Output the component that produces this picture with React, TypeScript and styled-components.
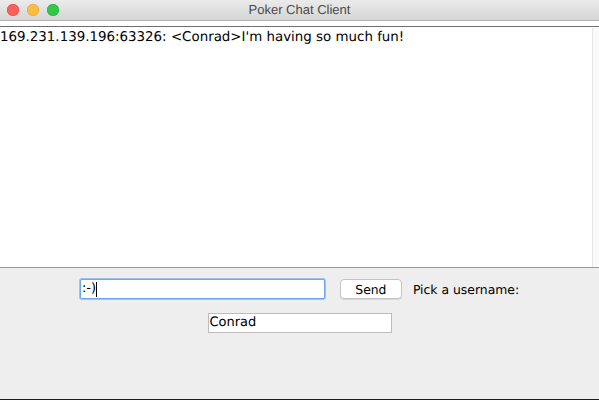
import React from "react";
import styled, { createGlobalStyle } from "styled-components";

const Global = createGlobalStyle`
  html, body { margin: 0; padding: 0; background: #ffffff; }
  body { width: 599px; height: 400px; overflow: hidden; }
`;

const Window = styled.div`
  width: 599px;
  height: 400px;
  display: flex;
  flex-direction: column;
  background: #eeeeee;
  border-bottom: 1px solid #1a1a1a;
  box-sizing: border-box;
  font-family: "DejaVu Sans", "Noto Sans", sans-serif;
  text-rendering: geometricPrecision;
`;

const TitleBar = styled.div`
  position: relative;
  height: 20px;
  flex: none;
  display: flex;
  align-items: center;
  justify-content: center;
  background: linear-gradient(#ebebeb, #d5d5d5);
  border-bottom: 1px solid #b4b4b4;
`;

const Lights = styled.div`
  position: absolute;
  left: 7px;
  top: 4px;
  display: flex;
  gap: 8px;
`;

const Light = styled.span<{ $c: string; $b: string }>`
  width: 12px;
  height: 12px;
  border-radius: 50%;
  background: ${(p) => p.$c};
  box-shadow: inset 0 0 0 0.5px ${(p) => p.$b};
`;

const Title = styled.div`
  font-family: "Liberation Sans", Arial, sans-serif;
  font-size: 13px;
  color: #4a4a4a;
  line-height: 20px;
`;

const Gap = styled.div`
  height: 5px;
  flex: none;
  background: #ffffff;
  border-bottom: 1px solid #6e6e6e;
`;

const ChatArea = styled.div`
  flex: none;
  height: 240px;
  display: flex;
  background: #ffffff;
  border-bottom: 1px solid #9a9a9a;
`;

const Log = styled.div`
  flex: 1;
  font-size: 13.4px;
  color: #000;
  padding-top: 3px;
  line-height: 16px;
  white-space: pre;
`;

const Scroll = styled.div`
  width: 6px;
  margin-top: 1px;
  background: #fafafa;
  border-left: 1px solid #e6e6e6;
`;

const Panel = styled.div`
  flex: 1;
  display: flex;
  flex-direction: column;
  align-items: center;
  padding-top: 11px;
  gap: 14px;
`;

const Row = styled.div`
  display: flex;
  align-items: center;
  justify-content: center;
`;

const Field = styled.div<{ $w: number; $focus?: boolean }>`
  width: ${(p) => p.$w}px;
  height: 20px;
  box-sizing: border-box;
  background: #ffffff;
  border: 1px solid ${(p) => (p.$focus ? "#6ea6f0" : "#bcbcbc")};
  box-shadow: ${(p) => (p.$focus ? "0 0 0 1px #9cc3f5" : "none")};
  border-radius: ${(p) => (p.$focus ? "2px" : "0")};
  font-size: 13px;
  line-height: 18px;
  padding-left: 1px;
  color: #000;
  display: flex;
  align-items: center;
`;

const Caret = styled.span`
  display: inline-block;
  width: 1px;
  height: 15px;
  background: #000;
`;

const Button = styled.div`
  width: 62px;
  height: 20px;
  margin-left: 15px;
  box-sizing: border-box;
  border: 1px solid #c4c4c4;
  border-radius: 4px;
  background: #ffffff;
  box-shadow: 0 1px 0 #d8d8d8;
  font-size: 12.4px;
  display: flex;
  align-items: center;
  justify-content: center;
  color: #000;
`;

const Label = styled.span`
  margin-left: 11px;
  font-size: 12.4px;
  color: #000;
`;

export default function App() {
  return (
    <>
      <Global />
      <Window>
        <TitleBar>
          <Lights>
            <Light $c="#fc605b" $b="#de4541" />
            <Light $c="#fdbc40" $b="#de9f34" />
            <Light $c="#34c84a" $b="#27aa35" />
          </Lights>
          <Title>Poker Chat Client</Title>
        </TitleBar>
        <Gap />
        <ChatArea>
          <Log>169.231.139.196:63326: &lt;Conrad&gt;I'm having so much fun!</Log>
          <Scroll />
        </ChatArea>
        <Panel>
          <Row>
            <Field $w={245} $focus>
              :-)<Caret />
            </Field>
            <Button>Send</Button>
            <Label>Pick a username:</Label>
          </Row>
          <Row>
            <Field $w={184}>Conrad</Field>
          </Row>
        </Panel>
      </Window>
    </>
  );
}
